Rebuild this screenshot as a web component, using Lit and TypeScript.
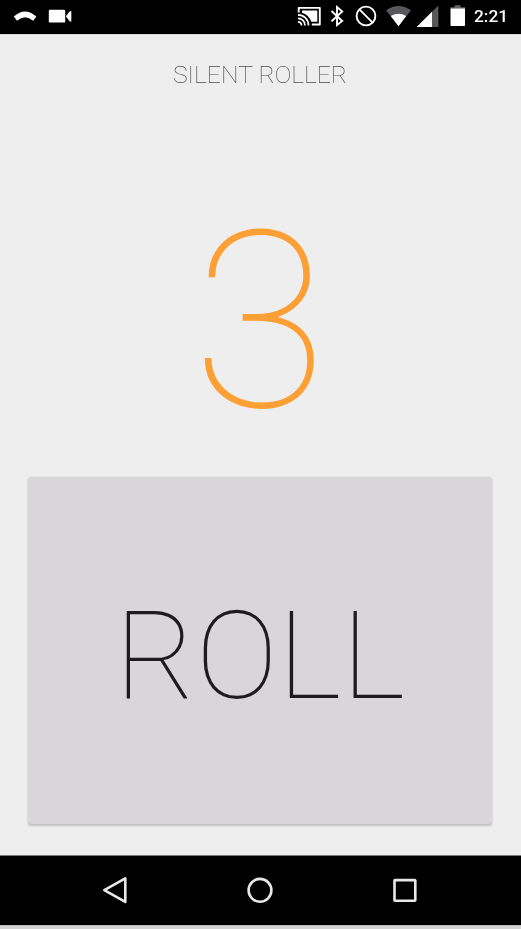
import { LitElement, html, css } from "lit";
import { customElement, state } from "lit/decorators.js";

@customElement("status-bar")
class StatusBar extends LitElement {
  static styles = css`
    :host { display: flex; height: 34px; flex: none; background: #000; color: #fff; }
    svg { display: block; width: 475px; height: 34px; flex: none; }
    .time { font: 500 17.3px/33px Roboto, sans-serif; white-space: nowrap; margin-left: -1px; will-change: transform; }
  `;
  render() {
    return html`
      <svg viewBox="0 0 475 34" fill="#fff">
        <path d="M13.8 16.6 Q25 6.2 36.4 16.6 L33.2 20.8 Q25 13.8 17 20.8 Z"/>
        <rect x="48.8" y="9.8" width="16.4" height="12.8" rx="1.2"/>
        <path d="M65.8 16.2 L69.8 11.2 H71.3 V21.5 H69.8 Z"/>
        <g fill="none" stroke="#fff">
          <path d="M298.7 12.5 V7.9 H319.8 V24.5 H311.8" stroke-width="1.9" stroke-linejoin="round"/>
          <path d="M298 21.8 A3.6 3.6 0 0 1 301.6 25.4 M298 18.4 A7 7 0 0 1 305 25.4 M298 14.9 A10.5 10.5 0 0 1 308.5 25.4" stroke-width="1.7"/>
        </g>
        <path d="M302 10.4 H317.3 V21.8 H311.2 Q308.8 14.8 302 12.8 Z"/>
        <path d="M331.5 11 L342.2 21 L337 25 V7 L342.2 11.5 L331.5 21.3" fill="none" stroke="#fff" stroke-width="1.9"/>
        <g fill="none" stroke="#fff" stroke-width="1.9">
          <circle cx="366" cy="16" r="9.4"/>
          <path d="M359.4 9.4 L372.6 22.6"/>
        </g>
        <path d="M386 10.3 Q398.5 1.6 411 10.3 L398.5 26.2 Z" fill="#58585a"/>
        <path d="M390.8 16.1 Q398.5 11.4 406.2 16.1 L398.5 26.2 Z"/>
        <path d="M416.7 27 L438.4 5.5 V27 Z" fill="#58585a"/>
        <path d="M416.7 27 L432 11.8 V27 Z"/>
        <path d="M450.5 8.5 V7.2 H454.7 V5.2 H460.6 V7.2 H465 V8.7 H450.5 Z" fill="#666668"/>
        <path d="M450.5 8.5 H465 V25.2 Q465 26 464.2 26 H451.3 Q450.5 26 450.5 25.2 Z"/>
      </svg>
      <span class="time">2:21</span>
    `;
  }
}

@customElement("nav-bar")
class NavBar extends LitElement {
  static styles = css`
    :host { display: block; flex: none; box-sizing: border-box; height: 70px; background: #000; border-top: 1px solid #777778; }
    svg { display: block; }
  `;
  render() {
    return html`
      <svg width="521" height="69" viewBox="0 1 521 69" fill="none" stroke="#e9e7e9" stroke-width="2.6" stroke-linejoin="round">
        <path d="M104.3 35.1 L125.3 23.3 V46.9 Z"/>
        <circle cx="260" cy="35.3" r="11.4"/>
        <rect x="394.5" y="25.1" width="20.8" height="20.6" rx="0.5"/>
      </svg>
    `;
  }
}

@customElement("app-root")
class AppRoot extends LitElement {
  static styles = css`
    :host {
      display: flex;
      flex-direction: column;
      width: 521px;
      height: 929px;
      overflow: hidden;
      background: #cfcfcf;
      font-family: Roboto, sans-serif;
    }
    main {
      display: flex;
      flex-direction: column;
      flex: none;
      box-sizing: border-box;
      height: 821px;
      padding: 25px 28px 31px;
      background: #eeeeef;
      border-top: 1px solid #dddadd;
    }
    h1 {
      margin: 0;
      padding-right: 1px;
      font-weight: 100;
      font-size: 24.8px;
      line-height: 30px;
      text-align: center;
      color: #4c4c4e;
      will-change: transform;
    }
    .value {
      flex: 1;
      display: flex;
      align-items: center;
      justify-content: center;
      padding: 78px 1px 0 0;
      font-weight: 100;
      font-size: 246.5px;
      line-height: 290px;
      color: #fc9f35;
    }
    button {
      flex: none;
      width: 464px;
      height: 347px;
      margin: 0;
      padding: 10px 0 0;
      border: 0;
      border-radius: 3px;
      background: #d8d6d9;
      box-shadow: 0 2px 2px rgba(0, 0, 0, 0.18), 0 0 2px rgba(0, 0, 0, 0.1);
      font-family: inherit;
      font-weight: 100;
      font-size: 123.3px;
      color: #1d1b1f;
    }
    .edge { flex: none; height: 4px; background: linear-gradient(#b5b5b5, #d3d3d3 40%); }
  `;

  @state() private value = 3;

  private roll() {
    this.value = 1 + Math.floor(Math.random() * 6);
  }

  render() {
    return html`
      <status-bar></status-bar>
      <main>
        <h1>SILENT ROLLER</h1>
        <div class="value">${this.value}</div>
        <button @click=${this.roll}>ROLL</button>
      </main>
      <nav-bar></nav-bar>
      <div class="edge"></div>
    `;
  }
}
